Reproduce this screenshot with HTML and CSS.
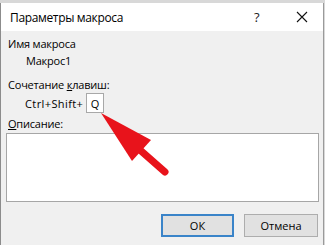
FILE: index.html
```html
<!DOCTYPE html>
<html lang="ru">
<head>
<meta charset="utf-8">
<title>Параметры макроса</title>
<link rel="stylesheet" href="styles.css">
</head>
<body>
<div class="window">
  <div class="titlebar">
    <span class="title">Параметры макроса</span>
    <span class="help">?</span>
    <svg class="close" width="12" height="12" viewBox="0 0 12 12"><path d="M1 1L11 11M11 1L1 11" stroke="#111" stroke-width="1.1" fill="none"/></svg>
  </div>
  <div class="content">
    <div class="label first">Имя макроса</div>
    <div class="value">Макрос1</div>
    <div class="label keys">Сочетание <u>к</u>лавиш:</div>
    <div class="shortcut">
      <span class="combo">Ctrl+Shift+</span>
      <span class="keybox">Q</span>
    </div>
    <div class="label desc"><u>О</u>писание:</div>
    <div class="textarea"></div>
    <div class="buttons">
      <button class="btn default">ОК</button>
      <button class="btn">Отмена</button>
    </div>
  </div>
  <svg class="arrow" width="325" height="245" viewBox="0 0 325 245">
    <line x1="140" y1="150" x2="165" y2="172" stroke="#e8131b" stroke-width="7" stroke-linecap="round"/>
    <polygon points="101,113 151,140 132,161" fill="#e8131b"/>
  </svg>
</div>
</body>
</html>
```
FILE: styles.css
```css
html, body {
  margin: 0;
  padding: 0;
  background: #d8d8d8;
}
body {
  font-family: "Open Sans", "Noto Sans", sans-serif;
  font-size: 11px;
  color: #000;
}
.window {
  position: relative;
  width: 322px;
  height: 242px;
  margin-top: 3px;
  border-left: 1px solid #8c8c8c;
  border-right: 1px solid #9a9a9a;
  background: #f0f0f0;
  overflow: hidden;
}
.titlebar {
  height: 28px;
  background: #ffffff;
  display: flex;
  align-items: center;
  padding-left: 9px;
}
.title {
  flex: 1;
  font-size: 12px;
  color: #000;
  letter-spacing: -0.35px;
}
.help {
  width: 14px;
  font-size: 13px;
  color: #222;
  margin-right: 28px;
}
.close {
  margin-right: 15px;
}
.content {
  padding: 0 4px 0 5px;
}
.label, .value {
  line-height: 16px;
  height: 16px;
  margin-left: 2px;
  letter-spacing: -0.2px;
}
.label.first {
  padding-top: 5px;
}
.value {
  margin-left: 20px;
  margin-top: 1px;
}
.label.keys {
  margin-top: 8px;
}
.shortcut {
  display: flex;
  align-items: center;
  height: 20px;
  margin-left: 19px;
}
.combo {
  width: 61px;
  letter-spacing: 0.4px;
}
.keybox {
  width: 16px;
  height: 18px;
  border: 1px solid #a8a8a8;
  background: #fff;
  display: flex;
  align-items: center;
  justify-content: center;
  font-size: 11px;
}
.label.desc {
  margin-top: 3px;
}
.textarea {
  margin-top: 1px;
  height: 67px;
  background: #fff;
  border: 1px solid #a6a6a6;
}
.buttons {
  display: flex;
  justify-content: flex-end;
  gap: 10px;
  margin-top: 12px;
  margin-right: 1px;
}
.btn {
  font-family: "Open Sans", "Noto Sans", sans-serif;
  font-size: 11px;
  color: #000;
  width: 74px;
  height: 23px;
  padding: 0;
  background: #e1e1e1;
  border: 1px solid #adadad;
}
.btn.default {
  width: 73px;
  border: 2px solid #3a84c9;
}
.arrow {
  position: absolute;
  left: -1px;
  top: -3px;
  pointer-events: none;
}
```
